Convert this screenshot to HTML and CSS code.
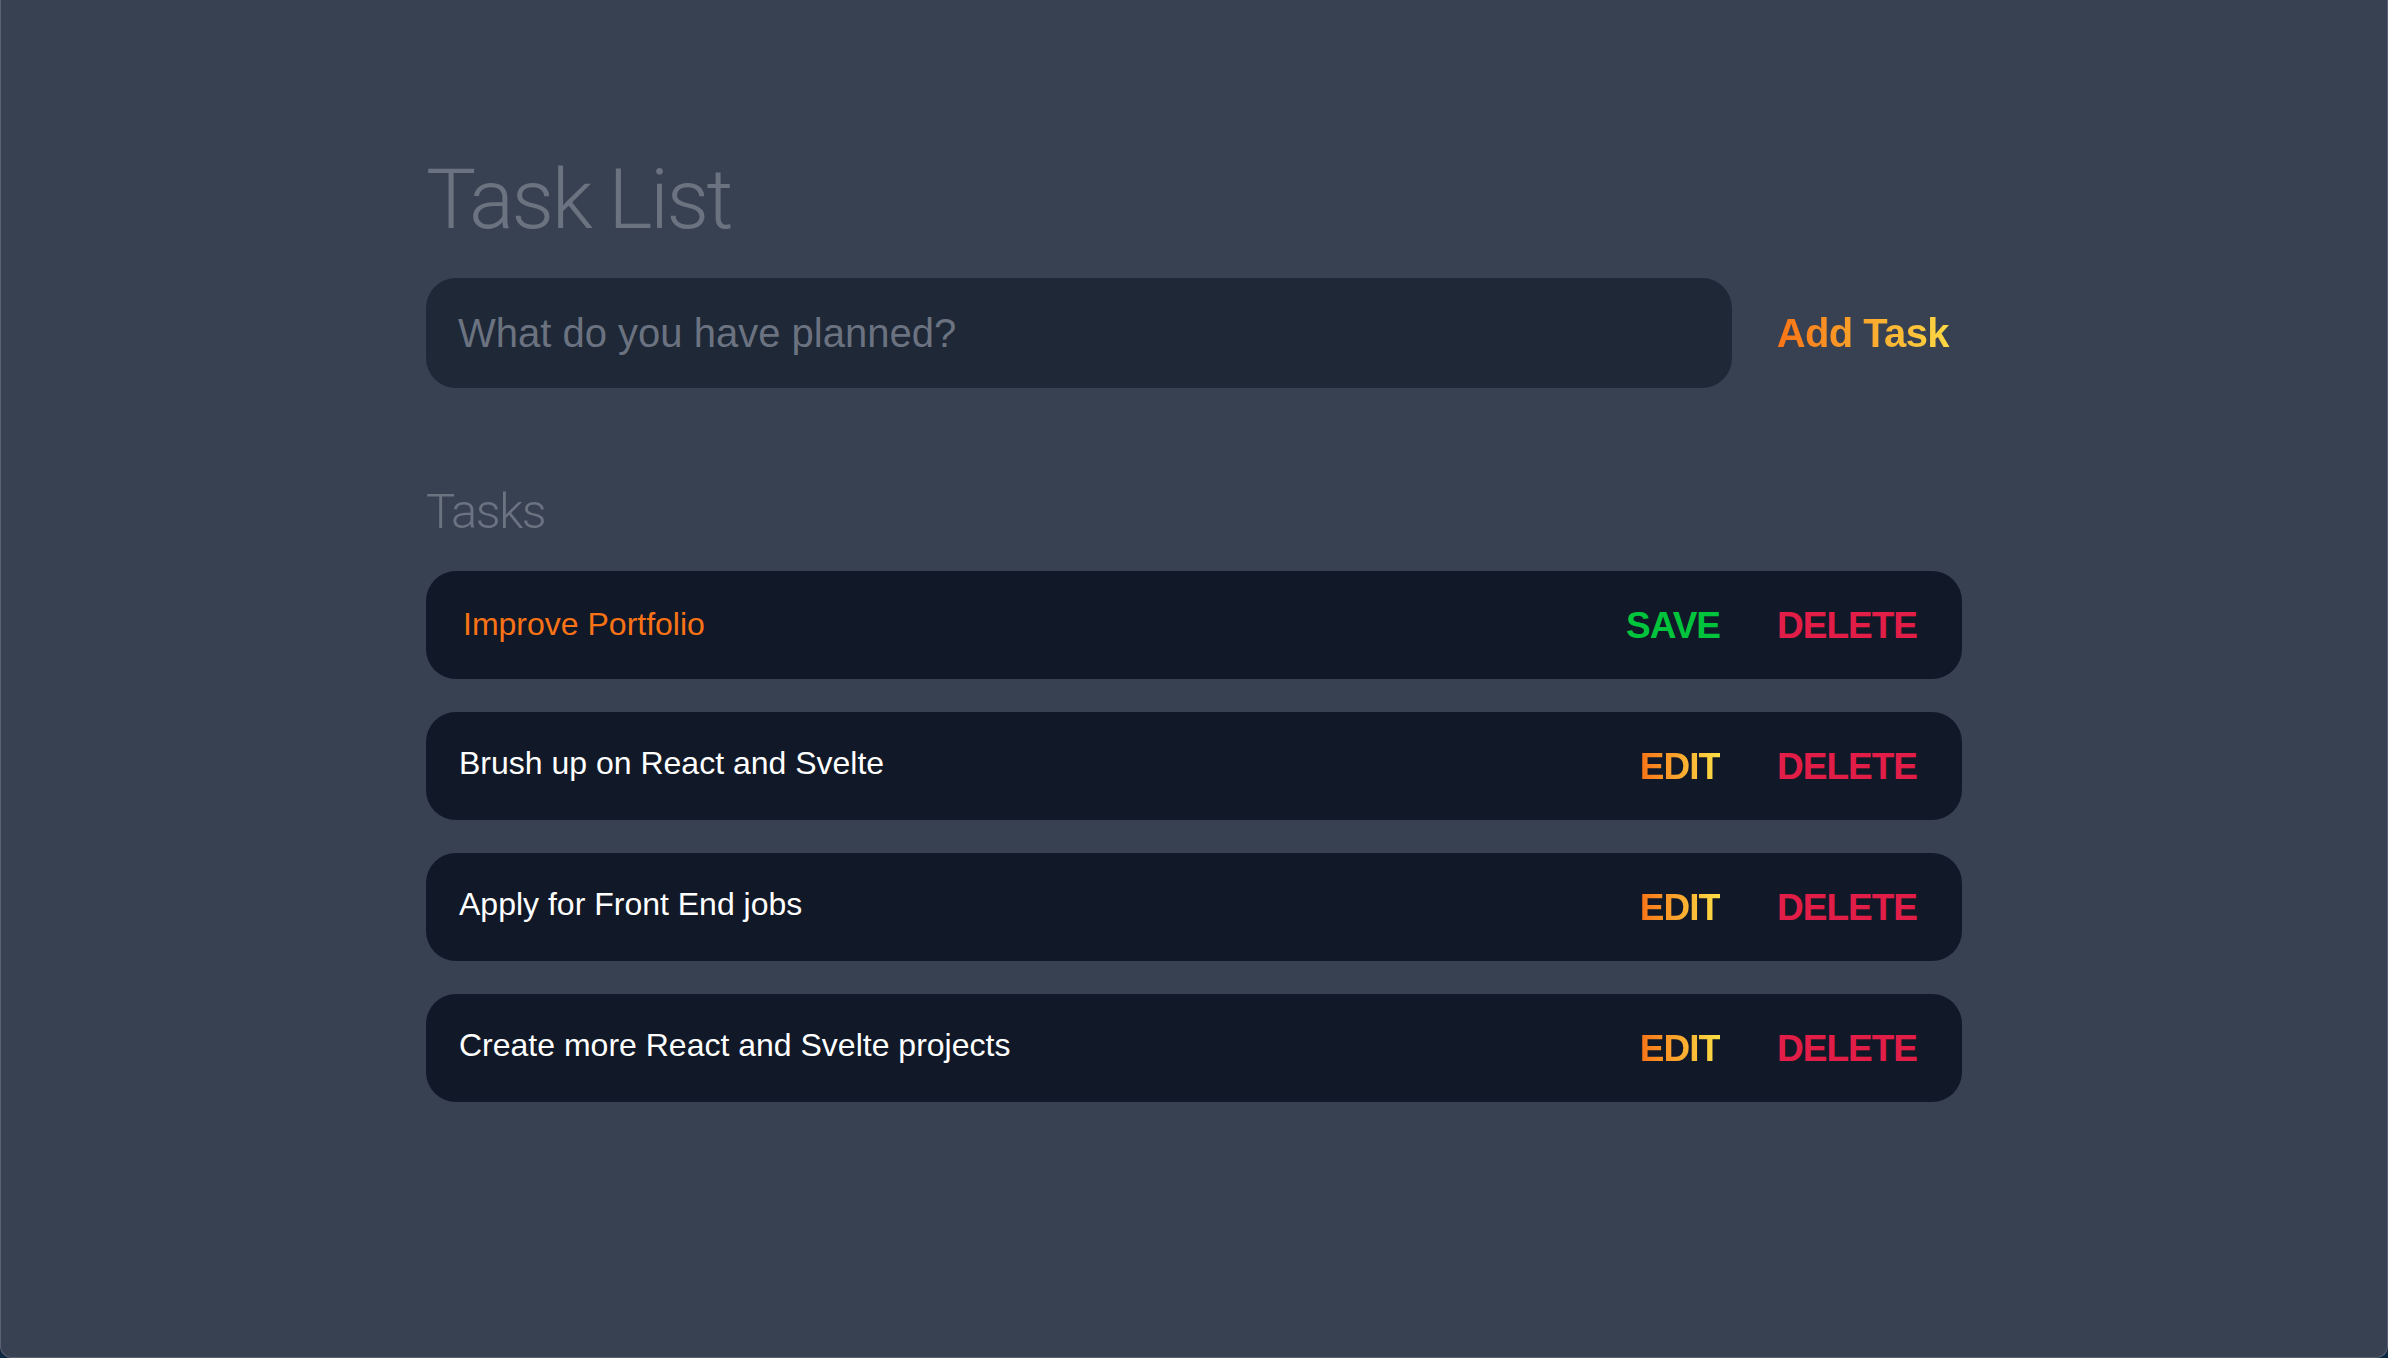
FILE: index.html
```html
<!DOCTYPE html>
<html lang="en">
<head>
<meta charset="utf-8">
<title>Task List</title>
<link rel="stylesheet" href="styles.css">
</head>
<body>
<div class="window">
  <main class="app">
    <h1 class="title">Task List</h1>
    <form class="new-task">
      <input class="new-task-input" type="text" placeholder="What do you have planned?">
      <button class="add-btn" type="button">Add Task</button>
    </form>
    <section class="tasks">
      <h2 class="tasks-heading">Tasks</h2>
      <div class="task-list">
        <div class="task">
          <input class="task-edit" type="text" value="Improve Portfolio">
          <div class="actions">
            <button class="btn btn-save" type="button">SAVE</button>
            <button class="btn btn-delete" type="button">DELETE</button>
          </div>
        </div>
        <div class="task">
          <span class="task-text">Brush up on React and Svelte</span>
          <div class="actions">
            <button class="btn btn-edit" type="button">EDIT</button>
            <button class="btn btn-delete" type="button">DELETE</button>
          </div>
        </div>
        <div class="task">
          <span class="task-text">Apply for Front End jobs</span>
          <div class="actions">
            <button class="btn btn-edit" type="button">EDIT</button>
            <button class="btn btn-delete" type="button">DELETE</button>
          </div>
        </div>
        <div class="task">
          <span class="task-text">Create more React and Svelte projects</span>
          <div class="actions">
            <button class="btn btn-edit" type="button">EDIT</button>
            <button class="btn btn-delete" type="button">DELETE</button>
          </div>
        </div>
      </div>
    </section>
  </main>
</div>
</body>
</html>
```
FILE: styles.css
```css
html {
  background: #0e2740;
}
body {
  margin: 0;
  font-family: "Liberation Sans", Arial, sans-serif;
}
.window {
  box-sizing: border-box;
  height: 100vh;
  background: #384152;
  border: 1px solid #5b6373;
  border-top: none;
  border-radius: 0 0 12px 12px;
}
.app {
  width: 1536px;
  margin: 0 auto;
  padding-top: 158px;
}
.title {
  margin: 0 0 36px;
  font-family: Roboto, "Liberation Sans", sans-serif;
  font-size: 84px;
  line-height: 84px;
  font-weight: 300;
  letter-spacing: -2.5px;
  color: #6b7280;
}
.new-task {
  display: flex;
  align-items: center;
  gap: 45px;
  margin: 0;
}
.new-task-input {
  flex: 1;
  min-width: 0;
  box-sizing: border-box;
  height: 110px;
  padding: 0 0 0 32px;
  border: none;
  outline: none;
  border-radius: 30px;
  background: #1e2837;
  font-family: inherit;
  font-size: 40px;
  color: #e5e7eb;
}
.new-task-input::placeholder {
  color: #6b7280;
}
.add-btn {
  padding: 0 13px 0 0;
  border: none;
  background: linear-gradient(90deg, #f97316, #fde047);
  -webkit-background-clip: text;
  background-clip: text;
  color: transparent;
  font-family: inherit;
  font-weight: 700;
  font-size: 40px;
  letter-spacing: -0.6px;
  line-height: 1;
  cursor: pointer;
}
.tasks {
  margin-top: 100px;
}
.tasks-heading {
  margin: 0 0 35px;
  font-family: Roboto, "Liberation Sans", sans-serif;
  font-size: 49px;
  line-height: 48px;
  font-weight: 300;
  letter-spacing: -1.5px;
  color: #6b7280;
}
.task-list {
  display: flex;
  flex-direction: column;
  gap: 33px;
}
.task {
  display: flex;
  align-items: center;
  justify-content: space-between;
  box-sizing: border-box;
  height: 108px;
  padding: 0 45px 0 33px;
  border-radius: 30px;
  background: #111827;
}
.task-text {
  font-size: 32px;
  line-height: 1;
  color: #ffffff;
  padding-bottom: 6px;
}
.task-edit {
  flex: 1;
  min-width: 0;
  padding: 0 0 2px 4px;
  border: none;
  outline: none;
  background: transparent;
  font-family: inherit;
  font-size: 32px;
  line-height: 1;
  color: #f97316;
}
.actions {
  display: flex;
  align-items: center;
  gap: 57px;
}
.btn {
  padding: 0;
  border: none;
  background: none;
  font-family: inherit;
  font-weight: 700;
  font-size: 37px;
  line-height: 1;
  letter-spacing: -1px;
  cursor: pointer;
}
.btn-save {
  color: #00c43c;
}
.btn-delete {
  color: #e11d48;
}
.btn-edit {
  background: linear-gradient(90deg, #f97316, #fde047);
  -webkit-background-clip: text;
  background-clip: text;
  color: transparent;
}
```
